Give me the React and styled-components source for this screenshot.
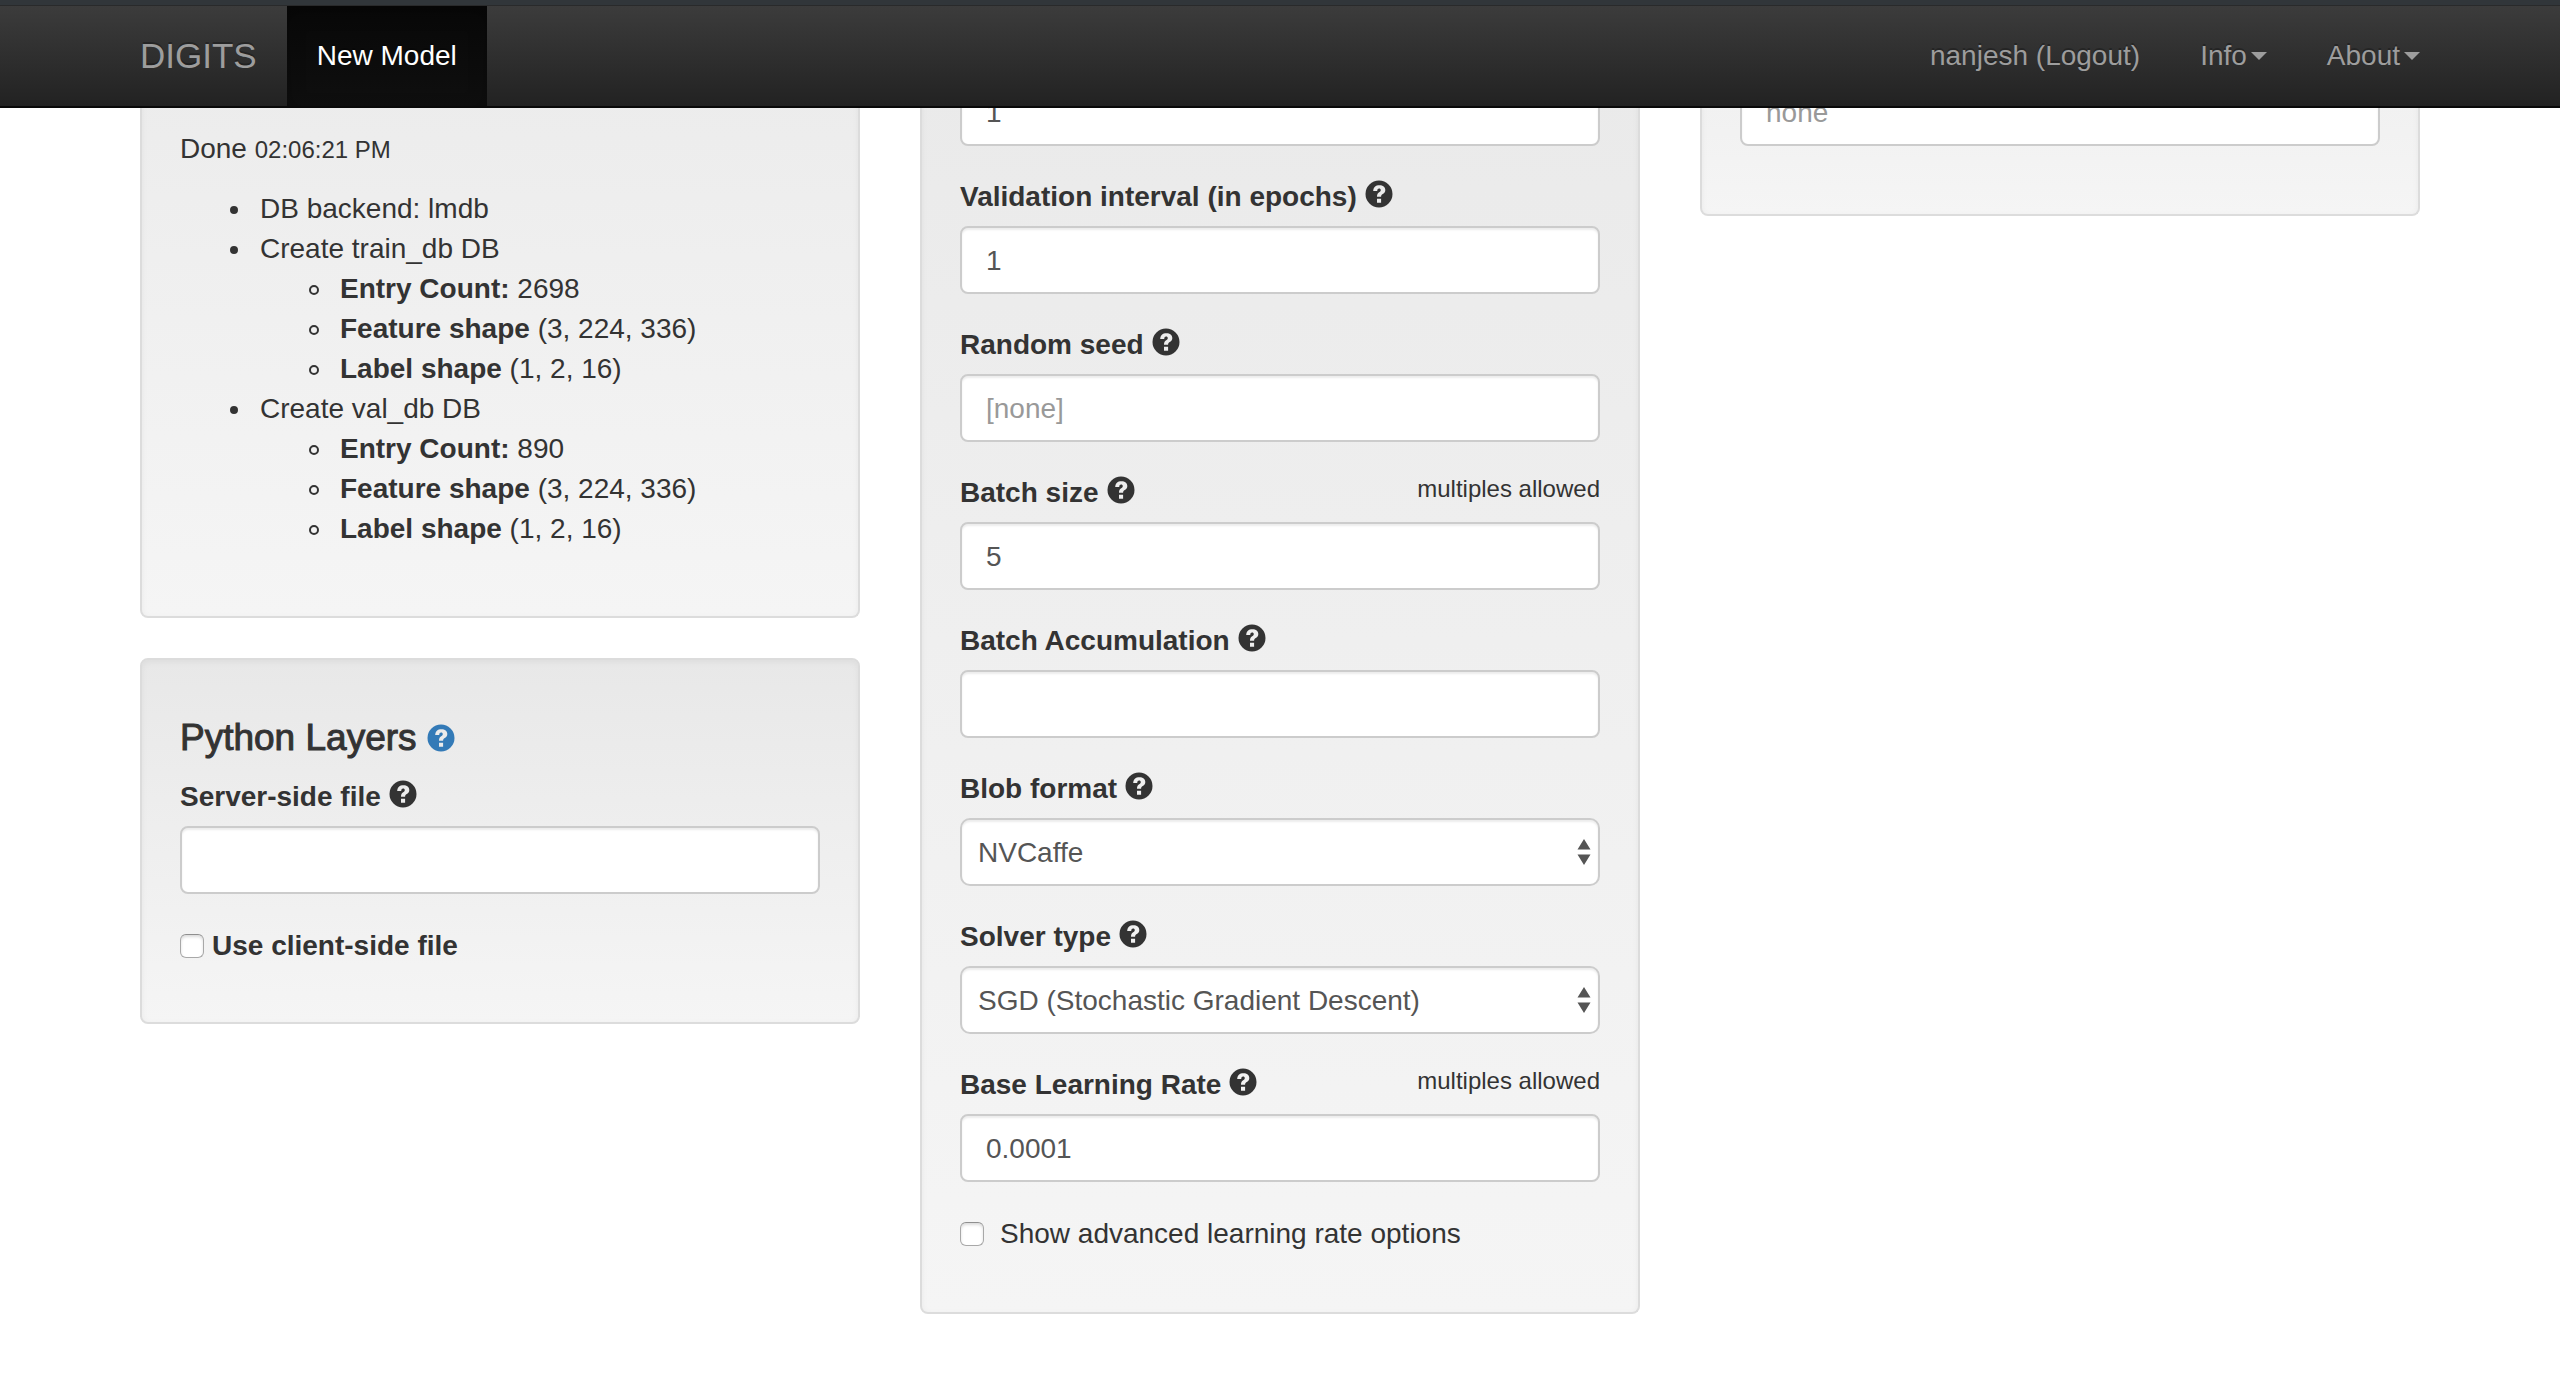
import React from 'react';
import styled, { createGlobalStyle } from 'styled-components';

const GlobalStyle = createGlobalStyle`
  *, *::before, *::after { box-sizing: border-box; }
  body {
    margin: 0;
    background: #fff;
    color: #333;
    font-family: "Helvetica Neue", "Liberation Sans", Arial, sans-serif;
    font-size: 28px;
    line-height: 40px;
  }
`;

const Navbar = styled.header`
  position: fixed;
  top: 0;
  left: 0;
  right: 0;
  z-index: 10;
  padding-top: 1px;
  border-top: 5px solid #31363a;
  border-bottom: 2px solid #090909;
  background: linear-gradient(to bottom, #3c3c3c 0%, #222 100%);
  box-shadow: inset 0 1px 0 #292a2b;
`;

const Container = styled.div`
  max-width: 2340px;
  margin: 0 auto;
  padding: 0 30px;
`;

const NavBar = styled(Container)`
  display: flex;
  align-items: center;
  justify-content: space-between;
`;

const NavGroup = styled.nav`
  display: flex;
  margin: 0 -30px;
`;

const NavLink = styled.a`
  display: flex;
  align-items: center;
  gap: 4px;
  padding: 30px;
  color: ${(p) => (p.$active ? '#fff' : '#9d9d9d')};
  font-size: ${(p) => (p.$brand ? '35px' : '28px')};
  line-height: 40px;
  text-decoration: none;
  text-shadow: 0 -2px 0 rgba(0, 0, 0, 0.25);
  ${(p) =>
    p.$active &&
    `background: linear-gradient(to bottom, #080808 0%, #0f0f0f 100%);
     box-shadow: inset 0 6px 18px rgba(0, 0, 0, 0.25);`}
`;

const Caret = styled.span`
  border-top: 8px solid currentColor;
  border-left: 8px solid transparent;
  border-right: 8px solid transparent;
`;

const Columns = styled.main`
  display: grid;
  grid-template-columns: repeat(3, minmax(0, 1fr));
  align-items: start;
  gap: 60px;
  padding-top: 78px;
`;

const Column = styled.div`
  display: grid;
  gap: 40px;
`;

const Panel = styled.section`
  padding: 38px;
  border: 2px solid #dcdcdc;
  border-radius: 8px;
  background: linear-gradient(to bottom, ${(p) => p.$from || '#e8e8e8'} 0%, #f5f5f5 100%);
  box-shadow: inset 0 2px 6px rgba(0, 0, 0, 0.05);
  ${(p) => p.$continued && 'padding-top: 0; border-top: 0; border-radius: 0 0 8px 8px;'}
`;

const Status = styled.p`
  margin: 0 0 20px;
  padding-top: 51px;
`;

const Small = styled.small`
  font-size: 24px;
  line-height: 34px;
`;

const List = styled.ul`
  margin: 0;
  padding: 0 0 ${(p) => (p.$last ? '29px' : '0')} 80px;
  list-style: none;
`;

const Item = styled.li`
  position: relative;
  &::before {
    content: "";
    position: absolute;
    top: ${(p) => (p.$ring ? '16px' : '17px')};
    left: ${(p) => (p.$ring ? '-31px' : '-30px')};
    width: ${(p) => (p.$ring ? '10px' : '8px')};
    height: ${(p) => (p.$ring ? '10px' : '8px')};
    border-radius: 50%;
    border: ${(p) => (p.$ring ? '2px' : '4px')} solid #333;
  }
`;

const Heading = styled.h4`
  display: flex;
  align-items: center;
  gap: 10px;
  margin: 20px 0 18px;
  font-size: 37px;
  font-weight: 500;
  line-height: 40px;
  -webkit-text-stroke: 1px currentColor;
`;

const HelpLink = styled.a`
  display: flex;
  color: #337ab7;
`;

const Group = styled.div`
  margin-bottom: 30px;
`;

const LabelRow = styled.div`
  display: flex;
  justify-content: space-between;
  align-items: flex-start;
  margin-bottom: 10px;
`;

const Label = styled.label`
  display: flex;
  gap: 8px;
  font-weight: 700;
`;

const LabelText = styled.span`
  padding-top: 1px;
  margin-bottom: -1px;
`;

const HelpSvg = styled.svg`
  display: block;
  width: 28px;
  height: 28px;
  margin-top: ${(p) => (p.$label ? '4px' : '0')};
`;

const Input = styled.input`
  display: block;
  width: 100%;
  height: 68px;
  padding: 13px 24px 11px;
  border: 2px solid #ccc;
  border-radius: 8px;
  background: #fff;
  box-shadow: inset 0 2px 2px rgba(0, 0, 0, 0.075);
  color: #555;
  font: inherit;
  &::placeholder { color: #999; opacity: 1; }
`;

const SelectWrap = styled.div`
  position: relative;
`;

const Select = styled.select`
  appearance: none;
  display: block;
  width: 100%;
  height: 68px;
  padding: 1px 48px 0 16px;
  border: 2px solid #ccc;
  border-radius: 10px;
  background: #fff;
  box-shadow: inset 0 2px 2px rgba(0, 0, 0, 0.075);
  color: #555;
  font: inherit;
`;

const Arrows = styled.svg`
  position: absolute;
  right: 9px;
  top: 21px;
  width: 14px;
  height: 26px;
  pointer-events: none;
`;

const CheckLabel = styled.label`
  display: flex;
  align-items: center;
  gap: ${(p) => (p.$bold ? '8px' : '16px')};
  margin: 32px 0 ${(p) => (p.$bold ? '18px' : '20px')};
  font-weight: ${(p) => (p.$bold ? 700 : 400)};
`;

const Checkbox = styled.input`
  appearance: none;
  width: 24px;
  height: 24px;
  margin: 0;
  border: 1px solid #a8a8a8;
  border-top-color: #8f8f8f;
  border-radius: 6px;
  background: #fff;
  box-shadow: inset 0 2px 3px rgba(0, 0, 0, 0.14);
`;

function Help({ label }) {
  return (
    <HelpSvg viewBox="0 0 28 28" $label={label} aria-hidden="true">
      <path
        fill="currentColor"
        stroke="none"
        fillRule="evenodd"
        d="M14 .5a13.5 13.5 0 1 1 0 27a13.5 13.5 0 0 1 0-27zM14.400 5.200c-3.800 0-6 2-6.200 5.700h4c.1-1.700.7-2.500 1.900-2.500 1 0 1.700.6 1.700 1.500 0 .9-.4 1.400-1.600 2.300-1.600 1.100-2.200 2.200-2.200 4.500h4.100c0-1.200.4-1.700 1.700-2.600 1.800-1.200 2.500-2.500 2.500-4.200 0-2.900-2.300-4.700-5.900-4.700zM12 18.700v4h4.100v-4z"
      />
    </HelpSvg>
  );
}

function Field({ id, label, note, options, ...rest }) {
  return (
    <Group>
      {label && (
        <LabelRow>
          <Label htmlFor={id}>
            <LabelText>{label}</LabelText>
            <Help label />
          </Label>
          {note && <Small>{note}</Small>}
        </LabelRow>
      )}
      {options ? (
        <SelectWrap>
          <Select id={id}>
            {options.map((o) => (
              <option key={o}>{o}</option>
            ))}
          </Select>
          <Arrows viewBox="0 0 14 26" aria-hidden="true">
            <path fill="#555" d="M7 0l6.500 10.500H.5zM7 26L.5 15.500h13z" />
          </Arrows>
        </SelectWrap>
      ) : (
        <Input id={id} type="text" {...rest} />
      )}
    </Group>
  );
}

function DbEntry({ name, count }) {
  return (
    <Item>
      Create {name} DB
      <List>
        <Item $ring><b>Entry Count:</b> {count}</Item>
        <Item $ring><b>Feature shape</b> (3, 224, 336)</Item>
        <Item $ring><b>Label shape</b> (1, 2, 16)</Item>
      </List>
    </Item>
  );
}

export default function App() {
  return (
    <>
      <GlobalStyle />
      <Navbar>
        <NavBar>
          <NavGroup>
            <NavLink href="#" $brand>DIGITS</NavLink>
            <NavLink href="#" $active>New Model</NavLink>
          </NavGroup>
          <NavGroup>
            <NavLink href="#">nanjesh (Logout)</NavLink>
            <NavLink href="#">Info<Caret /></NavLink>
            <NavLink href="#">About<Caret /></NavLink>
          </NavGroup>
        </NavBar>
      </Navbar>
      <Container>
        <Columns>
          <Column>
            <Panel $continued $from="#ececec">
              <Status>Done <Small>02:06:21 PM</Small></Status>
              <List $last>
                <Item>DB backend: lmdb</Item>
                <DbEntry name="train_db" count="2698" />
                <DbEntry name="val_db" count="890" />
              </List>
            </Panel>
            <Panel>
              <Heading>
                Python Layers
                <HelpLink href="#" aria-label="Help"><Help /></HelpLink>
              </Heading>
              <Field id="server-file" label="Server-side file" />
              <CheckLabel $bold>
                <Checkbox type="checkbox" />
                Use client-side file
              </CheckLabel>
            </Panel>
          </Column>
          <Panel $continued $from="#eaeaea">
            <Field id="snapshot" aria-label="Snapshot interval (in epochs)" defaultValue="1" />
            <Field id="validation" label="Validation interval (in epochs)" defaultValue="1" />
            <Field id="seed" label="Random seed" placeholder="[none]" />
            <Field id="batch" label="Batch size" note="multiples allowed" defaultValue="5" />
            <Field id="accumulation" label="Batch Accumulation" />
            <Field id="blob" label="Blob format" options={['NVCaffe']} />
            <Field id="solver" label="Solver type" options={['SGD (Stochastic Gradient Descent)']} />
            <Field id="rate" label="Base Learning Rate" note="multiples allowed" defaultValue="0.0001" />
            <CheckLabel>
              <Checkbox type="checkbox" />
              Show advanced learning rate options
            </CheckLabel>
          </Panel>
          <Panel $continued $from="#f0f0f0">
            <Field id="crop" aria-label="Crop size" placeholder="none" />
          </Panel>
        </Columns>
      </Container>
    </>
  );
}
